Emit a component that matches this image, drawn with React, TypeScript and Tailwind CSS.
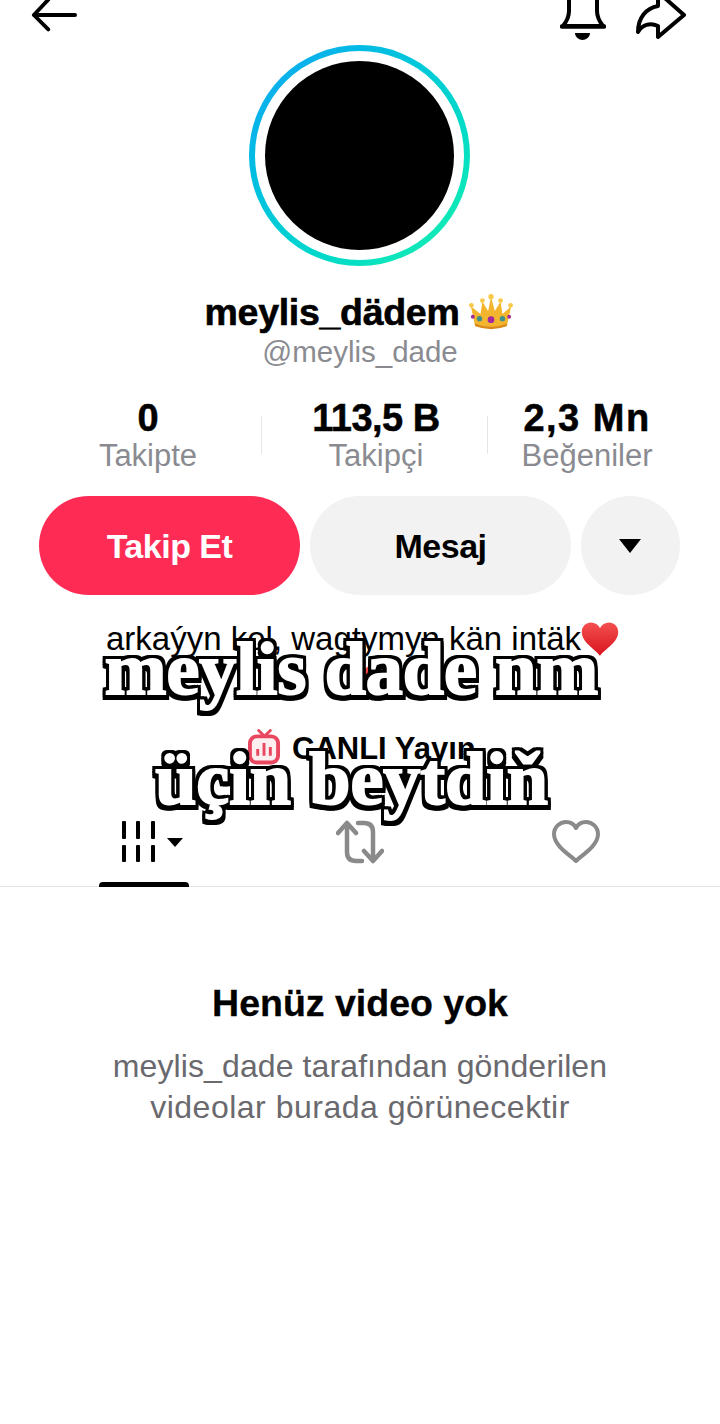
import React from "react";

const Crown = () => (
  <svg width="44" height="38" viewBox="0 0 46 38">
    <path d="M6 32 L2 13 L12 21 L14 8 L20 18 L23 3 L27 18 L33 8 L35 21 L44 13 L40 32 Q23 40 6 32Z" fill="#f4b52e" />
    <path d="M6 31 Q23 38 40 31 L39.500 34 Q23 40 6.500 34Z" fill="#d98a1c" />
    <circle cx="2.500" cy="12" r="2.500" fill="#f7c948" /><circle cx="14" cy="7" r="2.500" fill="#f7c948" />
    <circle cx="23" cy="3" r="2.800" fill="#f7c948" /><circle cx="33" cy="7" r="2.500" fill="#f7c948" /><circle cx="43.500" cy="12" r="2.500" fill="#f7c948" />
    <circle cx="23" cy="27" r="3.500" fill="#a3289e" /><circle cx="11" cy="26" r="2.800" fill="#3f8f8a" /><circle cx="35" cy="26" r="2.800" fill="#3f8f8a" />
    <circle cx="4" cy="24" r="2" fill="#a3289e" /><circle cx="42" cy="24" r="2" fill="#a3289e" />
  </svg>
);

const Heart = ({ size = 38 }: { size?: number }) => (
  <svg width={size} height={size} viewBox="0 0 24 24">
    <defs>
      <linearGradient id="hg" x1="0" y1="0" x2="0" y2="1">
        <stop offset="0" stopColor="#f4504f" />
        <stop offset="1" stopColor="#d8141f" />
      </linearGradient>
    </defs>
    <path d="M12 22.500 C8.500 18 0.500 14 0.500 7.500 C0.500 3.800 3.300 1.500 6.300 1.500 C8.800 1.500 10.800 2.800 12 5 C13.200 2.800 15.200 1.500 17.700 1.500 C20.700 1.500 23.500 3.800 23.500 7.500 C23.500 14 15.500 18 12 22.500Z" fill="url(#hg)" />
  </svg>
);

const Stat = ({ value, label, cls, vcls }: { value: string; label: string; cls: string; vcls: string }) => (
  <div className={`flex flex-col items-center ${cls}`}>
    <div className={`text-[38px] leading-[40px] font-bold text-black [-webkit-text-stroke:0.5px_#000] ${vcls}`}>{value}</div>
    <div className="text-[31px] leading-[36px] text-[#8a8b91]">{label}</div>
  </div>
);

const overlay =
  "absolute left-0 w-[703px] text-center whitespace-nowrap text-white font-bold [font-family:'Liberation_Serif',serif] text-[74px] leading-[84px] [-webkit-text-stroke:2px_white] [filter:drop-shadow(3px_0_0_#000)_drop-shadow(-3px_0_0_#000)_drop-shadow(0_-3px_0_#000)_drop-shadow(0_5px_0_#000)]";

export default function App() {
  return (
    <div className="relative w-[720px] h-[1424px] overflow-hidden bg-white [font-family:'Liberation_Sans',Arial,sans-serif]">
      <div className="h-[45px] flex items-start justify-between pl-[31px] pr-[34px]">
        <svg width="46" height="34" viewBox="0 0 48 34" fill="none" stroke="#000" strokeWidth="4" strokeLinecap="round" strokeLinejoin="round" className="mt-[-2px]">
          <path d="M46 17 H3 M18 1 L3 17 L18 32" />
        </svg>
        <div className="flex gap-[30px] items-start">
          <svg width="46" height="42" viewBox="0 0 46 42" fill="none" className="ml-[-2px]">
            <path d="M9 -2 V11 C9 17 7 21 3 26 H43 C39 21 37 17 37 11 V-2" stroke="#000" strokeWidth="4" strokeLinejoin="round" />
            <path d="M2 26.500 H44" stroke="#000" strokeWidth="4.500" strokeLinecap="round" />
            <path d="M15 33 H30 C30 37 26 40 22.500 40 C19 40 15 37 15 33Z" fill="#000" />
          </svg>
          <svg width="50" height="40" viewBox="0 0 50 40" fill="none" stroke="#000" strokeWidth="4" strokeLinejoin="round" strokeLinecap="round">
            <path d="M22 -8 L48 15 L22 37 V26 C14 22 6 25 2 32 C2 18 10 8 22 6 Z" />
          </svg>
        </div>
      </div>

      <div className="flex justify-center pr-[1px]">
        <div className="w-[221px] h-[221px] rounded-full p-[6px] bg-gradient-to-br from-[#16a4f4] to-[#1bf3aa]">
          <div className="w-full h-full rounded-full bg-white p-[10px]">
            <div className="w-full h-full rounded-full bg-black" />
          </div>
        </div>
      </div>

      <div className="mt-[25px] flex justify-center items-center gap-[10px] h-[42px] pr-[2px]">
        <span className="text-[37.500px] font-bold text-black tracking-[-0.3px] [-webkit-text-stroke:0.6px_#000]">meylis_dädem</span>
        <Crown />
      </div>
      <div className="text-center text-[29.500px] leading-[38px] text-[#8a8b91]">@meylis_dade</div>

      <div className="mt-[27px] relative h-[76px] flex">
        <Stat value="0" label="Takipte" cls="absolute left-[48px] w-[200px]" vcls="" />
        <Stat value="113,5 B" label="Takipçi" cls="absolute left-[276px] w-[200px]" vcls="tracking-[-0.5px]" />
        <Stat value="2,3 Mn" label="Beğeniler" cls="absolute left-[487px] w-[200px]" vcls="tracking-[1.5px]" />
        <div className="absolute left-[261px] top-[18px] h-[38px] w-px bg-[#e6e6e6]" />
        <div className="absolute left-[487px] top-[18px] h-[38px] w-px bg-[#e6e6e6]" />
      </div>

      <div className="mt-[22px] flex gap-[10px] pl-[39px]">
        <div className="w-[261px] h-[99px] rounded-full bg-[#fe2c55] flex items-center justify-center text-white text-[34px] font-bold tracking-[-0.5px] pt-[1px]">Takip Et</div>
        <div className="w-[261px] h-[99px] rounded-full bg-[#f2f2f2] flex items-center justify-center text-black text-[34px] font-bold tracking-[-0.5px] pt-[1px]">Mesaj</div>
        <div className="w-[99px] h-[99px] rounded-full bg-[#f2f2f2] flex items-center justify-center">
          <svg width="24" height="16" viewBox="0 0 24 16" className="mr-[2px]"><path d="M1 1 H23 L12 15Z" fill="#000" /></svg>
        </div>
      </div>

      <div className="mt-[23px] flex justify-start items-center h-[42px] text-[33px] text-black whitespace-nowrap pl-[106px]">
        <span>arkaýyn kol,  wagtymyn kän intäk</span>
        <Heart size={38} />
      </div>
      <div className="flex justify-center h-[40px] pt-[4px] pl-[10px]"><Heart size={26} /></div>

      <div className="mt-[28px] flex items-center h-[42px] gap-[11px] text-[31px] font-bold text-black pl-[248px]">
        <svg width="33" height="36" viewBox="0 0 34 36" fill="none" className="mt-[-4px]">
          <path d="M11 1 L17 7 L23 1" stroke="#e8475f" strokeWidth="3" strokeLinecap="round" />
          <rect x="2" y="7" width="29" height="27" rx="7" stroke="#e8475f" strokeWidth="4" fill="#fdeef0" />
          <path d="M10 20 V27 M16.500 14 V27 M23 18 V27" stroke="#e8475f" strokeWidth="3" />
        </svg>
        <span>CANLI Yayın</span>
      </div>

      <div className="mt-[49px] relative h-[68px] border-b border-[#e3e3e3]">
        <div className="absolute left-[121px] top-[2px]">
          <svg width="66" height="42" viewBox="0 0 66 42" fill="#000">
            <rect x="1" y="0" width="4" height="18" rx="1" /><rect x="15" y="0" width="4" height="18" rx="1" /><rect x="30" y="0" width="4" height="18" rx="1" />
            <rect x="1" y="24" width="4" height="17" rx="1" /><rect x="15" y="24" width="4" height="17" rx="1" /><rect x="30" y="24" width="4" height="17" rx="1" />
            <path d="M46 17 H62 L54 26Z" />
          </svg>
        </div>
        <div className="absolute left-[336px] top-[1px]">
          <svg width="48" height="44" viewBox="0 0 48 44" fill="none" stroke="#8a8a8a" strokeWidth="4.500" strokeLinecap="round" strokeLinejoin="round">
            <path d="M2 13 L11 3 L20 13 M11 4 V32 Q11 41 20 41 H26" />
            <path d="M46 31 L37 41 L28 31 M37 40 V12 Q37 3 28 3 H22" />
          </svg>
        </div>
        <div className="absolute left-[552px] top-[1px]">
          <svg width="48" height="44" viewBox="0 0 48 44" fill="none" stroke="#8a8a8a" strokeWidth="4" strokeLinejoin="round">
            <path d="M24 41 C18 35 2 26 2 14 C2 7 8 2 14 2 C18 2 22 4 24 8 C26 4 30 2 34 2 C40 2 46 7 46 14 C46 26 30 35 24 41Z" />
          </svg>
        </div>
        <div className="absolute left-[99px] bottom-[-1px] w-[90px] h-[5px] bg-black rounded-t-[4px]" />
      </div>

      <div className="mt-[91px] text-center text-[37.500px] leading-[50px] font-bold text-black [-webkit-text-stroke:0.3px_#000]">Henüz video yok</div>
      <div className="mt-[18px] text-center text-[32px] leading-[41px] text-[#69696e]">
        <div className="tracking-[0.1px]">meylis_dade tarafından gönderilen</div>
        <div className="tracking-[0.5px]">videolar burada görünecektir</div>
      </div>

      <div className={`${overlay} top-[627px]`}>meylis dade nm</div>
      <div className={`${overlay} top-[737px]`}>üçin beytdiň</div>
    </div>
  );
}
